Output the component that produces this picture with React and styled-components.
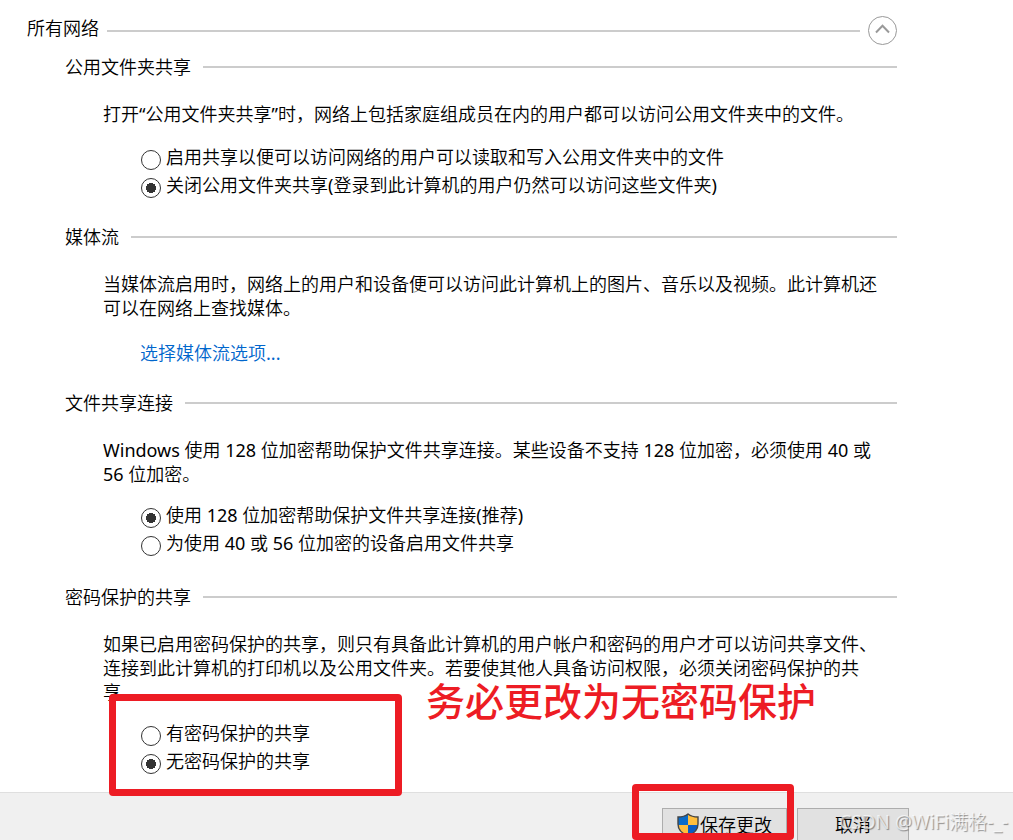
import React, {useState} from "react";
import styled, {createGlobalStyle} from "styled-components";

const GlobalStyle = createGlobalStyle`
  * {
    box-sizing: border-box;
  }

  body {
    margin: 0;
    background-color: #fff;
    color: #000;
    font-family: "Noto Sans", "Noto Sans CJK SC DemiLight", "Noto Sans CJK SC", sans-serif;
    font-size: 18px;
    font-weight: 400;
    line-height: 24px;
  }
`;

const Page = styled.div`
  position: relative;
  display: flex;
  flex-direction: column;
  min-height: 100vh;
  max-height: 100vh;
  overflow: hidden;
`;

const Main = styled.main`
  flex: none;
  padding: 16px 116px 0 27px;
`;

const ProfileHeader = styled.header`
  display: flex;
  align-items: center;
  gap: 8px;
  margin-bottom: 10px;
`;

const ProfileTitle = styled.h1`
  margin: 0;
  padding-bottom: 5px;
  font-size: 18px;
  font-weight: inherit;
`;

const Rule = styled.span`
  flex: 1;
  height: 2px;
  background-color: #ccc;
`;

const CollapseButton = styled.button`
  display: flex;
  align-items: center;
  justify-content: center;
  width: 29px;
  height: 29px;
  padding: 0 0 3px;
  border: 1px solid #999;
  border-radius: 50%;
  background-color: #fff;
`;

const Section = styled.section`
  margin: 0 0 ${props => props.$gap}px 38px;
`;

const SectionHeader = styled.div`
  display: flex;
  align-items: center;
  gap: 12px;
  margin-bottom: 23px;
`;

const SectionTitle = styled.h2`
  margin: 0;
  font-size: 18px;
  font-weight: inherit;
`;

const Description = styled.p`
  margin: 0 8px 0 38px;
`;

const Options = styled.div`
  position: relative;
  margin: ${props => props.$loose ? "19px" : "17px"} 0 0 76px;
`;

const Option = styled.label`
  display: flex;
  align-items: center;
  gap: 5px;
  height: 28px;
`;

const OptionText = styled.span`
  padding-bottom: 4px;
`;

const Radio = styled.input`
  appearance: none;
  flex: none;
  width: 20px;
  height: 20px;
  margin: 2px 0 0;
  border: 1px solid #333;
  border-radius: 50%;
  background-color: #fff;

  &:checked {
    background-image: radial-gradient(circle, #333 5px, #fff 5px);
  }
`;

const MediaLink = styled.a`
  display: block;
  width: fit-content;
  margin: 21px 0 0 75px;
  color: #0066cc;
  text-decoration: none;
`;

const Footer = styled.footer`
  flex: 1 0 48px;
  display: flex;
  align-items: flex-start;
  justify-content: flex-end;
  gap: 10px;
  padding: 15px 104px 0 0;
  border-top: 1px solid #dfdfdf;
  background-color: #f0f0f0;
`;

const SaveWrap = styled.div`
  position: relative;
`;

const Button = styled.button`
  display: flex;
  align-items: center;
  justify-content: center;
  gap: 1px;
  width: ${props => props.$wide ? "125px" : "112px"};
  height: 34px;
  padding: 0;
  border: 1px solid #adadad;
  background-color: #e1e1e1;
  color: #000;
  font: inherit;
`;

const Highlight = styled.div`
  position: absolute;
  top: ${props => props.$top};
  left: ${props => props.$left};
  width: ${props => props.$width};
  height: ${props => props.$height};
  border: 7px solid #ed1c24;
  border-radius: 4px;
  pointer-events: none;
`;

const Note = styled.strong`
  position: absolute;
  top: -46px;
  left: 285px;
  color: #ed1c24;
  font-family: "Noto Sans CJK SC", sans-serif;
  font-size: 39px;
  font-weight: 500;
  line-height: 48px;
  white-space: nowrap;
`;

const Watermark = styled.span`
  position: absolute;
  right: 5px;
  bottom: 4px;
  color: rgba(255, 255, 255, 0.7);
  font-size: 19px;
  line-height: 28px;
  text-shadow: 1px 1px 1px rgba(0, 0, 0, 0.4);
  pointer-events: none;
`;

function Shield() {
  return (
    <svg width="22" height="24" viewBox="0 0 22 24" aria-hidden="true">
      <clipPath id="shield">
        <path d="M11 1C8.500 3 5 4 1 4V11C1 17 6 21 11 23C16 21 21 17 21 11V4C17 4 13.500 3 11 1Z"/>
      </clipPath>
      <g clipPath="url(#shield)">
        <path d="M0 0H11V12H0Z" fill="#0a6bc8"/>
        <path d="M11 0H22V12H11Z" fill="#ffbe3d"/>
        <path d="M0 12H11V24H0Z" fill="#ffbe3d"/>
        <path d="M11 12H22V24H11Z" fill="#0a5cc4"/>
      </g>
      <path d="M11 1C8.500 3 5 4 1 4V11C1 17 6 21 11 23C16 21 21 17 21 11V4C17 4 13.500 3 11 1Z"
            fill="none" stroke="#444" strokeWidth="1.400"/>
    </svg>
  );
}

function RadioOption({name, value, selected, onSelect, children}) {
  return (
    <Option>
      <Radio type="radio" name={name} checked={selected === value} onChange={() => onSelect(value)}/>
      <OptionText>{children}</OptionText>
    </Option>
  );
}

function SettingSection({title, gap = 26, children}) {
  return (
    <Section $gap={gap}>
      <SectionHeader>
        <SectionTitle>{title}</SectionTitle>
        <Rule/>
      </SectionHeader>
      {children}
    </Section>
  );
}

function App() {
  const [folder, setFolder] = useState("off");
  const [encryption, setEncryption] = useState("128");
  const [password, setPassword] = useState("off");

  return (
    <Page lang="zh-CN">
      <GlobalStyle/>
      <Main>
        <ProfileHeader>
          <ProfileTitle>所有网络</ProfileTitle>
          <Rule/>
          <CollapseButton type="button" aria-label="所有网络">
            <svg width="15" height="10" viewBox="0 0 15 10" aria-hidden="true">
              <path d="M1 8.500L7.500 1.800L14 8.500" fill="none" stroke="#999" strokeWidth="2"/>
            </svg>
          </CollapseButton>
        </ProfileHeader>

        <SettingSection title="公用文件夹共享" gap={24}>
          <Description>打开“公用文件夹共享”时，网络上包括家庭组成员在内的用户都可以访问公用文件夹中的文件。</Description>
          <Options $loose>
            <RadioOption name="folder" value="on" selected={folder} onSelect={setFolder}>
              启用共享以便可以访问网络的用户可以读取和写入公用文件夹中的文件
            </RadioOption>
            <RadioOption name="folder" value="off" selected={folder} onSelect={setFolder}>
              关闭公用文件夹共享(登录到此计算机的用户仍然可以访问这些文件夹)
            </RadioOption>
          </Options>
        </SettingSection>

        <SettingSection title="媒体流">
          <Description>当媒体流启用时，网络上的用户和设备便可以访问此计算机上的图片、音乐以及视频。此计算机还可以在网络上查找媒体。</Description>
          <MediaLink href="#media">选择媒体流选项...</MediaLink>
        </SettingSection>

        <SettingSection title="文件共享连接">
          <Description>Windows 使用 128 位加密帮助保护文件共享连接。某些设备不支持 128 位加密，必须使用 40 或 56 位加密。</Description>
          <Options>
            <RadioOption name="encryption" value="128" selected={encryption} onSelect={setEncryption}>
              使用 128 位加密帮助保护文件共享连接(推荐)
            </RadioOption>
            <RadioOption name="encryption" value="40" selected={encryption} onSelect={setEncryption}>
              为使用 40 或 56 位加密的设备启用文件共享
            </RadioOption>
          </Options>
        </SettingSection>

        <SettingSection title="密码保护的共享" gap={15}>
          <Description>如果已启用密码保护的共享，则只有具备此计算机的用户帐户和密码的用户才可以访问共享文件、连接到此计算机的打印机以及公用文件夹。若要使其他人具备访问权限，必须关闭密码保护的共享。</Description>
          <Options>
            <RadioOption name="password" value="on" selected={password} onSelect={setPassword}>
              有密码保护的共享
            </RadioOption>
            <RadioOption name="password" value="off" selected={password} onSelect={setPassword}>
              无密码保护的共享
            </RadioOption>
            <Highlight $top="-27px" $left="-32px" $width="293px" $height="102px"/>
            <Note>务必更改为无密码保护</Note>
          </Options>
        </SettingSection>
      </Main>

      <Footer>
        <SaveWrap>
          <Button type="button" $wide><Shield/>保存更改</Button>
          <Highlight $top="-24px" $left="-30px" $width="162px" $height="56px"/>
        </SaveWrap>
        <Button type="button">取消</Button>
      </Footer>
      <Watermark>CSDN @WiFi满格-_-</Watermark>
    </Page>
  );
}

export default App;
